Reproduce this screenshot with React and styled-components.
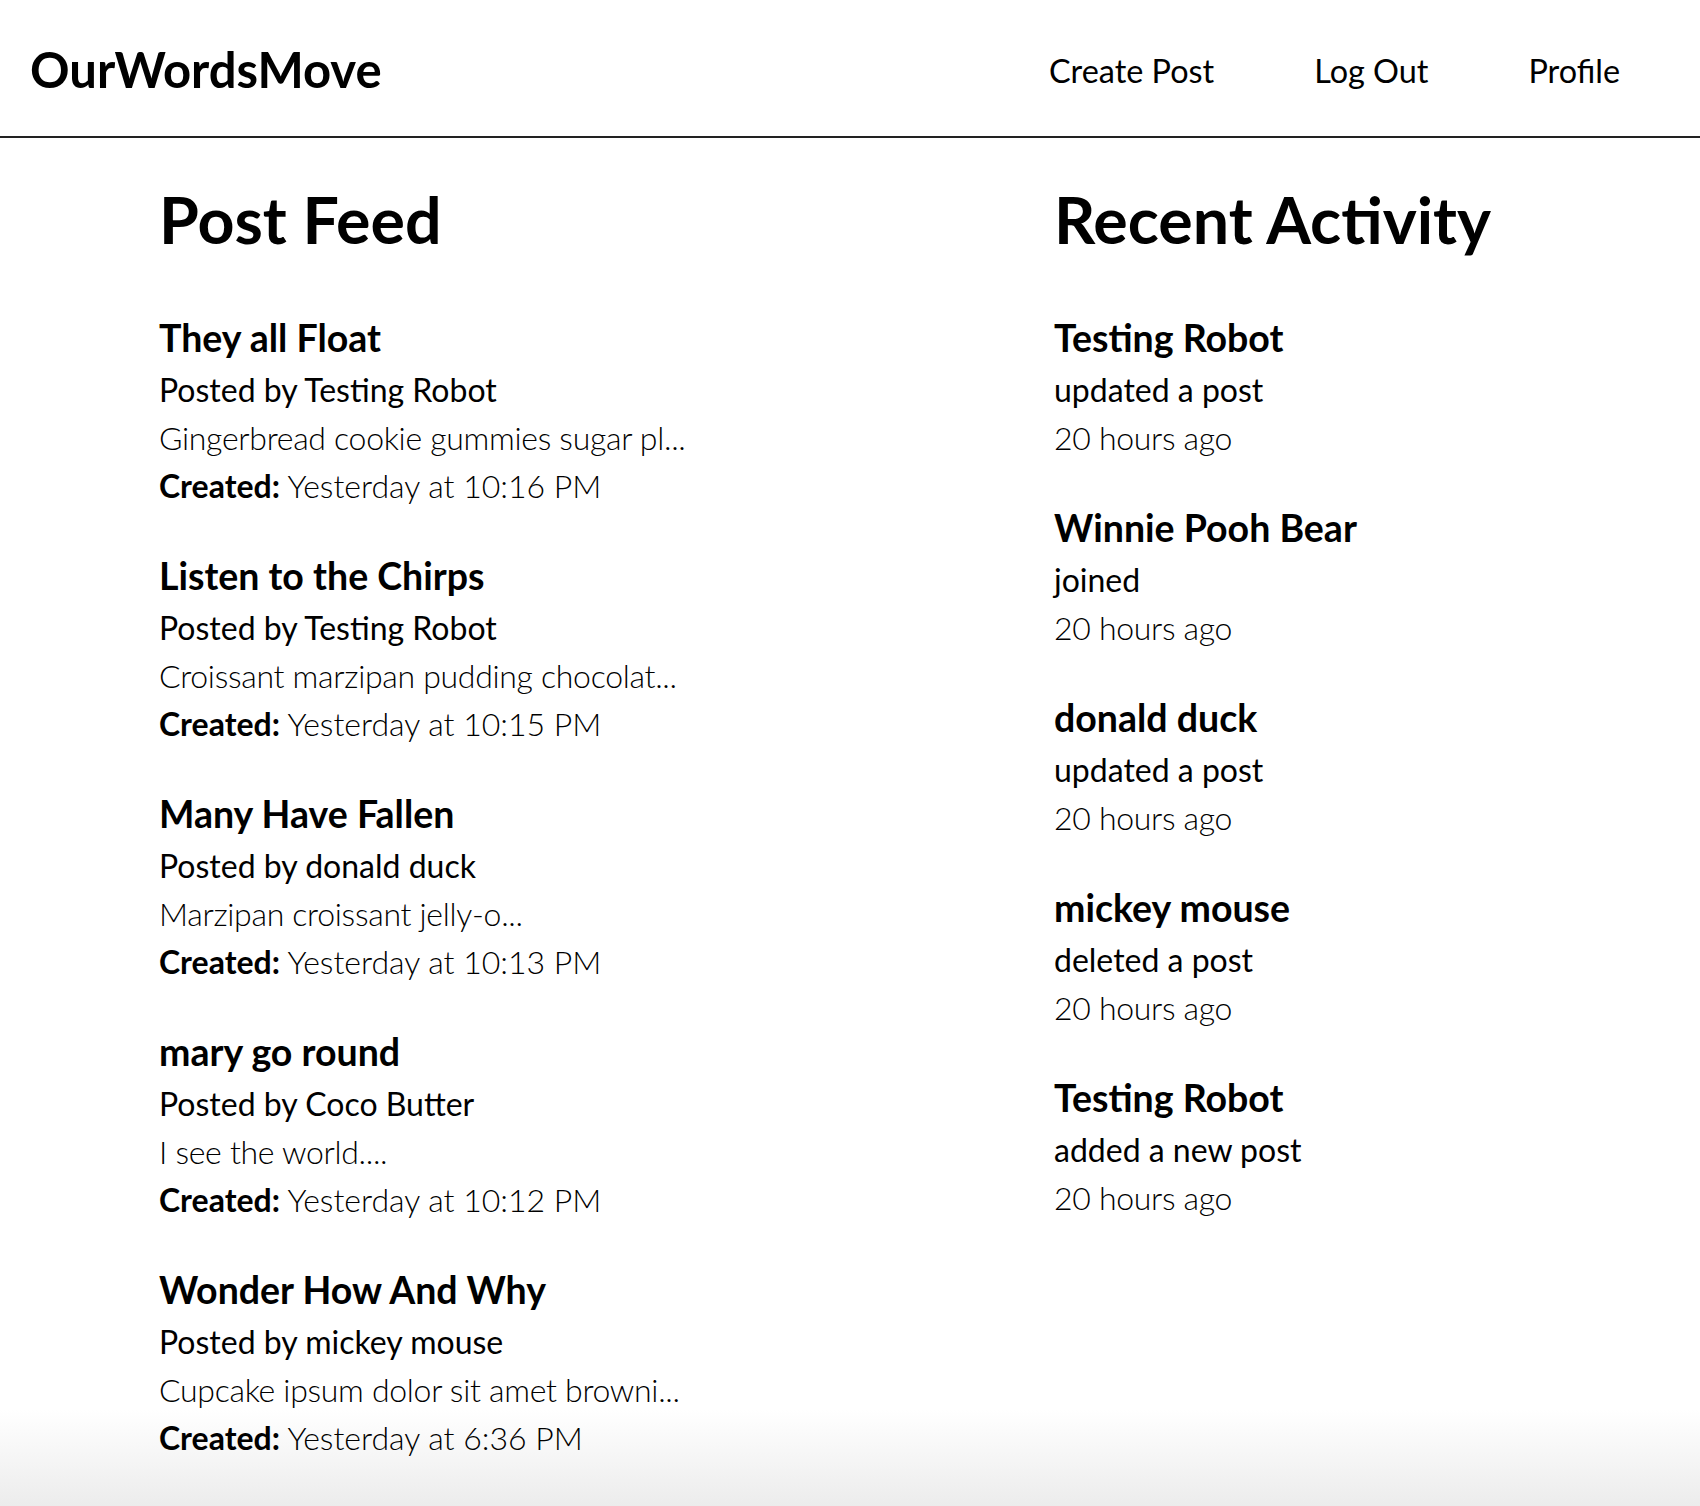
import React from "react";
import styled, { createGlobalStyle } from "styled-components";

const Global = createGlobalStyle`
  html {
    min-height: 100%;
    background: linear-gradient(to bottom, #ffffff 0, #ffffff 1410px, #ececec 1506px);
  }
  body {
    margin: 0;
    font-family: Lato, "Open Sans", sans-serif;
    color: #000;
    line-height: 1.5;
  }
`;

const Page = styled.div`
  display: flex;
  flex-direction: column;
`;

const Header = styled.header`
  display: flex;
  align-items: center;
  justify-content: space-between;
  height: 136px;
  padding: 0 80px 0 30px;
  border-bottom: 2px solid #222;
`;

const Logo = styled.div`
  font-size: 49px;
  font-weight: 700;
  padding-top: 4px;
`;

const Nav = styled.nav`
  display: flex;
  gap: 100px;
  padding-top: 6px;
`;

const NavLink = styled.a`
  font-size: 32.4px;
  font-weight: 400;
  color: #000;
  text-decoration: none;
  cursor: pointer;
`;

const Main = styled.main`
  display: grid;
  grid-template-columns: 895px 1fr;
  padding-left: 159px;
`;

const Column = styled.section`
  display: flex;
  flex-direction: column;
`;

const Heading = styled.h2`
  margin: 43px 0 56px;
  font-size: 64.5px;
  font-weight: 700;
  line-height: 1.2;
`;

const List = styled.div`
  display: flex;
  flex-direction: column;
  gap: 42px;
`;

const Item = styled.article`
  display: flex;
  flex-direction: column;
`;

const Title = styled.h3`
  margin: 0 0 4px;
  font-size: 37.5px;
  font-weight: 700;
  line-height: 48px;
`;

const Line = styled.div`
  font-size: 32px;
  line-height: 1.5;
  font-weight: ${(p) => (p.$light ? 300 : 400)};
  letter-spacing: ${(p) => (p.$tight ? "-0.3px" : "normal")};
`;

const Strong = styled.b`
  font-weight: 700;
`;

const posts = [
  { title: "They all Float", by: "Testing Robot", excerpt: "Gingerbread cookie gummies sugar pl...", created: "Yesterday at 10:16 PM" },
  { title: "Listen to the Chirps", by: "Testing Robot", excerpt: "Croissant marzipan pudding chocolat...", created: "Yesterday at 10:15 PM" },
  { title: "Many Have Fallen", by: "donald duck", excerpt: "Marzipan croissant jelly-o...", created: "Yesterday at 10:13 PM" },
  { title: "mary go round", by: "Coco Butter", excerpt: "I see the world....", created: "Yesterday at 10:12 PM" },
  { title: "Wonder How And Why", by: "mickey mouse", excerpt: "Cupcake ipsum dolor sit amet browni...", created: "Yesterday at 6:36 PM" },
];

const activity = [
  { name: "Testing Robot", action: "updated a post" },
  { name: "Winnie Pooh Bear", action: "joined" },
  { name: "donald duck", action: "updated a post" },
  { name: "mickey mouse", action: "deleted a post" },
  { name: "Testing Robot", action: "added a new post" },
];

export default function App() {
  return (
    <Page>
      <Global />
      <Header>
        <Logo>OurWordsMove</Logo>
        <Nav>
          <NavLink>Create Post</NavLink>
          <NavLink>Log Out</NavLink>
          <NavLink>Profile</NavLink>
        </Nav>
      </Header>
      <Main>
        <Column>
          <Heading>Post Feed</Heading>
          <List>
            {posts.map((p, i) => (
              <Item key={i}>
                <Title>{p.title}</Title>
                <Line>Posted by {p.by}</Line>
                <Line $light $tight>{p.excerpt}</Line>
                <Line $light>
                  <Strong>Created:</Strong> {p.created}
                </Line>
              </Item>
            ))}
          </List>
        </Column>
        <Column>
          <Heading>Recent Activity</Heading>
          <List>
            {activity.map((a, i) => (
              <Item key={i}>
                <Title>{a.name}</Title>
                <Line>{a.action}</Line>
                <Line $light $tight>20 hours ago</Line>
              </Item>
            ))}
          </List>
        </Column>
      </Main>
    </Page>
  );
}
